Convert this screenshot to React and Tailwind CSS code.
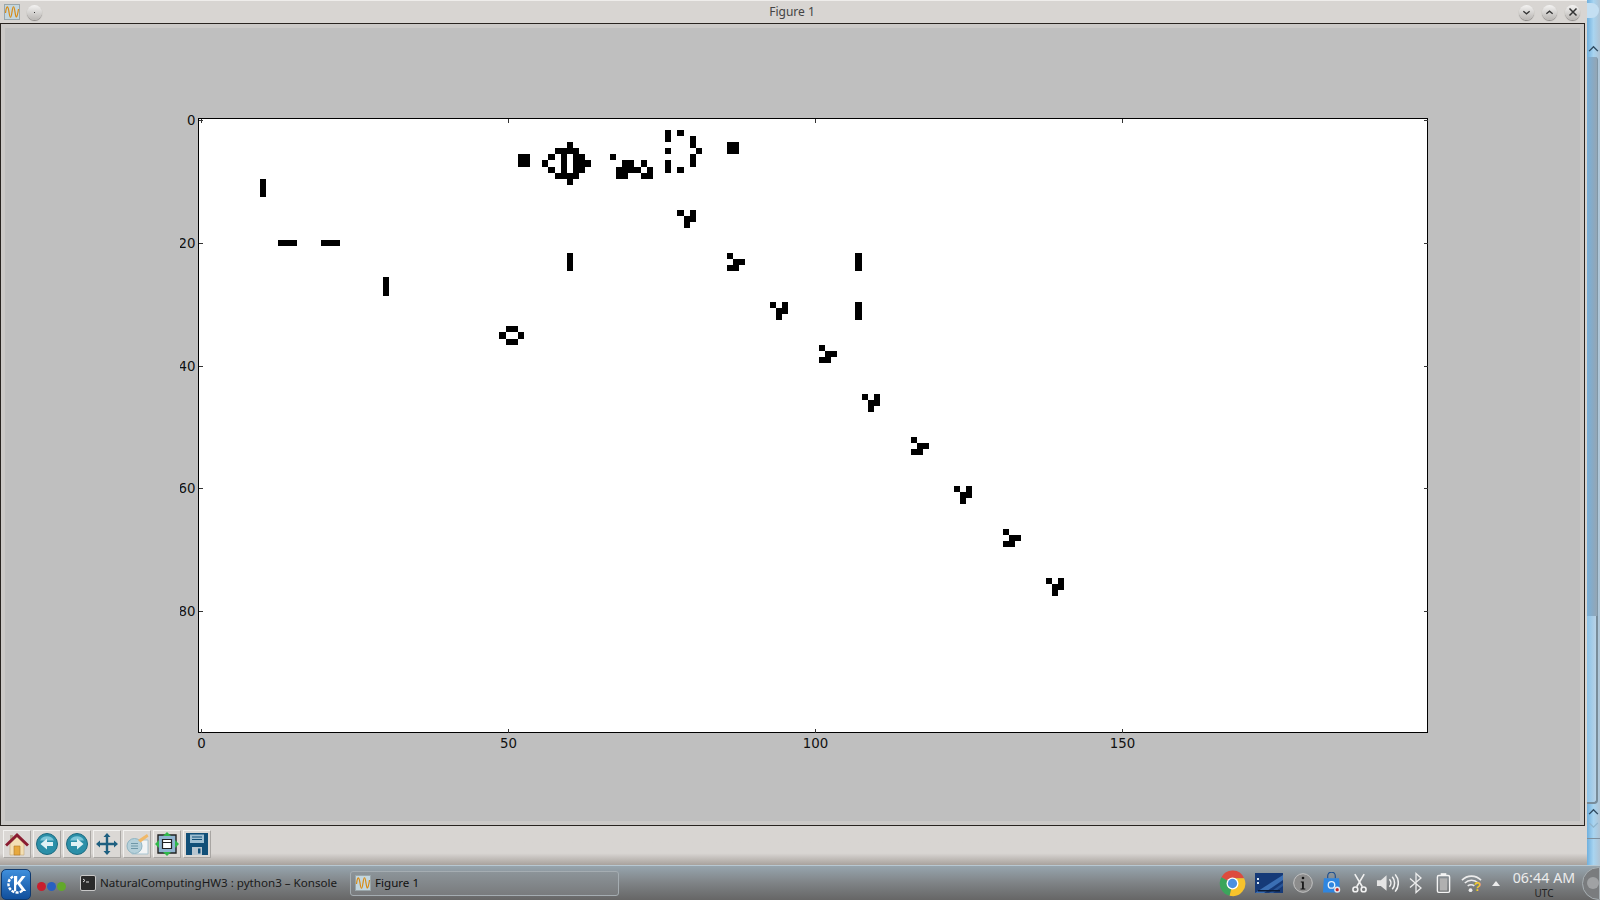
const CELL = 6.14;

const glider = (c, r) => [[c, r], [c + 2, r], [c + 1, r + 1], [c + 2, r + 1], [c + 1, r + 2]];
const zigzag = (c, r) => [[c, r], [c + 1, r + 1], [c + 2, r + 1], [c, r + 2], [c + 1, r + 2]];
const vbar = (c, r) => [[c, r], [c, r + 1], [c, r + 2]];
const hbar = (c, r) => [[c, r], [c + 1, r], [c + 2, r]];
const block = (c, r) => [[c, r], [c + 1, r], [c, r + 1], [c + 1, r + 1]];
const span = (r, from, to) => {
  const out = [];
  for (let c = from; c <= to; c++) out.push([c, r]);
  return out;
};

const cells = [
  ...vbar(10, 10), ...hbar(13, 20), ...hbar(20, 20), ...vbar(30, 26),
  // beehive
  ...span(34, 50, 51), [49, 35], [52, 35], ...span(36, 50, 51),
  ...block(52, 6),
  // big oscillator
  [60, 4], ...span(5, 58, 61), [57, 6], [59, 6], ...span(6, 61, 62),
  [56, 7], [59, 7], ...span(7, 61, 63), [57, 8], [59, 8], ...span(8, 61, 62),
  ...span(9, 58, 61), [60, 10],
  // gun debris
  [67, 6], ...span(7, 69, 70), [72, 7], ...span(8, 68, 71), [73, 8], ...span(9, 68, 69), ...span(9, 72, 73),
  // ring
  [76, 2], [76, 3], [78, 2], [80, 3], [80, 4], [81, 5], [76, 5], [80, 6], [80, 7], [76, 7], [76, 8], [78, 8],
  ...block(86, 4),
  ...vbar(60, 22), ...vbar(107, 22), ...vbar(107, 30),
  ...glider(78, 15), ...zigzag(86, 22), ...glider(93, 30), ...zigzag(101, 37), ...glider(108, 45),
  ...zigzag(116, 52), ...glider(123, 60), ...zigzag(131, 67), ...glider(138, 75),
];

const xTicks = [0, 50, 100, 150];
const yTicks = [0, 20, 40, 60, 80];

function WaveIcon({ className }) {
  return (
    <svg viewBox="0 0 16 16" className={className}>
      <rect x="0.5" y="0.5" width="15" height="15" fill="#c3d6de" stroke="#9aa6aa" />
      <path d="M1.5 9 C2.5 1, 4 1, 5 8 S7 15, 8 8 S10 1, 11 8 S13 15, 14.5 5" fill="none" stroke="#d98a12" strokeWidth="1.2" />
    </svg>
  );
}

function TitleButton({ children, className }) {
  return (
    <div className={"w-[15px] h-[15px] rounded-full bg-gradient-to-b from-[#f4f3f2] to-[#b9b6b3] shadow-[0_1px_1px_#8a8785] flex items-center justify-center " + (className || "")}>
      {children}
    </div>
  );
}

function Plot() {
  return (
    <svg width="1300" height="680" viewBox="0 0 1300 680" className="block ml-[175px] mt-[78px]" style={{ fontFamily: '"DejaVu Sans", sans-serif' }}>
      <g transform="translate(18.5 12.5)">
        <rect x="0" y="0" width="1229" height="614" fill="#fff" />
        <g shapeRendering="crispEdges" transform="translate(0 -1)">
          {cells.map(([c, r], i) => (
            <rect key={i} x={c * CELL} y={r * CELL} width={CELL} height={CELL} fill="#000" />
          ))}
        </g>
        <rect x="0" y="0" width="1229" height="614" fill="none" stroke="#000" strokeWidth="1.2" shapeRendering="crispEdges" />
        {xTicks.map((t) => {
          const x = Math.round((t + 0.5) * CELL);
          return (
            <g key={t}>
              <path d={`M${x} 0v4M${x} 614v-4`} stroke="#333" strokeWidth="1" shapeRendering="crispEdges" />
              <text x={x} y="629" textAnchor="middle" fontSize="13.33" fill="#111">{t}</text>
            </g>
          );
        })}
        {yTicks.map((t) => {
          const y = Math.round((t + 0.5) * CELL) - 1;
          return (
            <g key={t}>
              <path d={`M0 ${y}h4M1229 ${y}h-4`} stroke="#333" strokeWidth="1" shapeRendering="crispEdges" />
              <text x="-3" y={y + 4} textAnchor="end" fontSize="13.33" fill="#111">{t}</text>
            </g>
          );
        })}
      </g>
    </svg>
  );
}

function ToolButton({ children }) {
  return (
    <div className="w-[28px] h-[28px] border border-t-[#f2f1ef] border-l-[#f2f1ef] border-r-[#a8a5a2] border-b-[#a8a5a2] flex items-center justify-center bg-[#dbd8d5]">
      <svg viewBox="0 0 24 24" className="w-[24px] h-[24px]">{children}</svg>
    </div>
  );
}

function Toolbar() {
  return (
    <div className="flex gap-[2px] pl-[3px] pt-[4px]">
      <ToolButton>
        <path d="M5 3h3v5H5z" fill="#b8a890" />
        <path d="M5 12 12 5l7 7v11H5z" fill="#f3dfb4" stroke="#c8a878" strokeWidth="0.6" />
        <path d="M9 14h6v9H9z" fill="#e7a93e" stroke="#b07a2c" strokeWidth="0.6" />
        <path d="M1 13.5 12 3l11 10.5" fill="none" stroke="#8a1c30" strokeWidth="3" />
      </ToolButton>
      <ToolButton>
        <circle cx="12" cy="12" r="10.5" fill="#2b8fa8" stroke="#1c6a80" />
        <path d="M5 8.5a8 8 0 0 1 14 0" fill="#7cc6d8" />
        <path d="M5.5 12 12 6.5v3.5h6v4h-6v3.5z" fill="#dff1f5" />
      </ToolButton>
      <ToolButton>
        <circle cx="12" cy="12" r="10.5" fill="#2b8fa8" stroke="#1c6a80" />
        <path d="M5 8.5a8 8 0 0 1 14 0" fill="#7cc6d8" />
        <path d="M18.5 12 12 6.5v3.5H6v4h6v3.5z" fill="#dff1f5" />
      </ToolButton>
      <ToolButton>
        <path d="M12 1l3.5 4H13.2v5.8H19V8.5l4 3.5-4 3.5v-2.3h-5.8V19h2.3L12 23l-3.5-4h2.3v-5.8H5v2.3L1 12l4-3.5v2.3h5.8V5H8.5z" fill="#1e5f80" />
      </ToolButton>
      <ToolButton>
        <path d="M7 8h16v14H7z" fill="#f2f4f5" stroke="#a9c4d0" />
        <circle cx="9.5" cy="14" r="7.5" fill="#b5d0da" stroke="#8fb4c2" />
        <path d="M6 11.5h7M6 14h7M6 16.5h7" stroke="#6f97a8" strokeWidth="1.2" />
        <path d="M13 8 22 2l1.5 2.5-8 6z" fill="#f0b868" />
      </ToolButton>
      <ToolButton>
        <path d="M3 3h18v18H3z" fill="#8fb4d0" stroke="#222" strokeWidth="1.4" />
        <path d="M7.5 7.5h9v9h-9z" fill="#fff" stroke="#222" strokeWidth="1.2" />
        <path d="M8 10.5h8" stroke="#222" strokeWidth="1" />
        <path d="M12 0l4 4H8zM12 24l4-4H8zM0 12l4-4v8zM24 12l-4-4v8z" fill="#2fb84a" />
      </ToolButton>
      <ToolButton>
        <path d="M1 1h22v22H1z" fill="#114f78" />
        <path d="M5 2.5h14v8.5H5z" fill="#9fbfd2" />
        <path d="M7 5h10M7 7.5h10" stroke="#114f78" strokeWidth="1.2" />
        <path d="M7 15h10v8H7z" fill="#b8c6d0" />
        <path d="M13 16.5h2.5v5H13z" fill="#114f78" />
      </ToolButton>
    </div>
  );
}

function KdeLogo() {
  return (
    <div className="w-[30px] h-[31px] mt-[2px] rounded-[5px] bg-gradient-to-b from-[#3f8fdc] to-[#114f9c] border border-[#0e3a70] flex items-center justify-center">
      <svg viewBox="0 0 24 24" className="w-[24px] h-[24px]">
        <path d="M9 4.5A8.5 8.5 0 1 0 19 18" fill="none" stroke="#fff" strokeWidth="2.4" strokeDasharray="3 1.2" />
        <path d="M10 4h3.2v6.5L18 4h3.6l-5.4 7 6 8h-3.8l-5-7-1.2 1.4V19H10z" fill="#fff" />
      </svg>
    </div>
  );
}

function Tray() {
  return (
    <div className="flex items-center h-full">
      <svg viewBox="0 0 28 28" className="w-[27px] h-[27px] shrink-0">
        <path d="M14 14 2.5 7.5A13 13 0 0 1 26 8.5H14z" fill="#dd4b3e" />
        <path d="M14 14 2.5 7.5A13 13 0 0 0 11 26.7z" fill="#3ba55c" />
        <path d="M14 8.5h12A13 13 0 0 1 11 26.7L14 14z" fill="#f6c32c" />
        <circle cx="14" cy="14" r="6.2" fill="#fff" />
        <circle cx="14" cy="14" r="4.8" fill="#4a8fe0" />
      </svg>
      <svg viewBox="0 0 28 20" className="w-[28px] h-[20px] ml-[9px] shrink-0">
        <rect width="28" height="20" fill="#163a78" />
        <path d="M0 20 28 2v5L9 20z" fill="#3b6fb4" />
        <path d="M14 20 28 10v3l-10 7z" fill="#2a5698" />
        <rect x="2" y="5" width="2" height="2" fill="#d8e6f0" />
        <rect x="2" y="9" width="2" height="2" fill="#d8e6f0" />
        <rect x="3" y="17" width="22" height="1.5" fill="#0b1a34" />
      </svg>
      <svg viewBox="0 0 20 20" className="w-[20px] h-[20px] ml-[10px] shrink-0">
        <circle cx="10" cy="10" r="9.3" fill="#8c8c8c" stroke="#c4c4c4" />
        <circle cx="10" cy="5" r="1.3" fill="#111" />
        <path d="M7.8 8.4h3v7h1.5v1.2H7.5v-1.2h1.6V9.6H7.8z" fill="#111" />
      </svg>
      <svg viewBox="0 0 20 22" className="w-[19px] h-[22px] ml-[9px] shrink-0">
        <path d="M6 6V3.5a4 4 0 0 1 8 0V6" fill="none" stroke="#1d4f90" strokeWidth="1.2" />
        <path d="M2 6h16l1 15H1z" fill="#2f86e0" />
        <circle cx="10" cy="13" r="3.4" fill="none" stroke="#e8f2fb" strokeWidth="1.4" />
        <circle cx="16" cy="18" r="3.2" fill="#e8e8e8" />
        <circle cx="16" cy="18" r="1.7" fill="#c62828" />
      </svg>
      <svg viewBox="0 0 16 22" fill="none" stroke="#f1f1f1" strokeWidth="1.7" className="w-[15px] h-[22px] ml-[11px] shrink-0">
        <path d="M3 1.5 11 15M13 1.5 5 15" />
        <circle cx="3.6" cy="17.8" r="2.6" />
        <circle cx="12.4" cy="17.8" r="2.6" />
      </svg>
      <svg viewBox="0 0 24 22" className="w-[23px] h-[22px] ml-[9px] shrink-0">
        <path d="M1 8h4l6-5v16l-6-5H1z" fill="#e4e4e4" />
        <path d="M14 7a6 6 0 0 1 0 8M17 4.5a10 10 0 0 1 0 13M20 2a14 14 0 0 1 0 18" fill="none" stroke="#f1f1f1" strokeWidth="1.6" />
      </svg>
      <svg viewBox="0 0 14 22" fill="none" stroke="#ececec" strokeWidth="1.3" className="w-[14px] h-[22px] ml-[10px] shrink-0">
        <path d="M1 6.5 12 16 7 20.5V1.5L12 6 1 15.5" />
      </svg>
      <svg viewBox="0 0 16 22" fill="none" stroke="#f4f4f4" strokeWidth="1.5" className="w-[15px] h-[22px] ml-[13px] shrink-0">
        <rect x="1.5" y="3" width="13" height="18" rx="1.5" />
        <path d="M5 1.5h6" strokeWidth="2" />
        <rect x="4" y="6" width="8" height="13" fill="#b0b0b0" stroke="none" />
      </svg>
      <div className="relative w-[21px] h-[22px] ml-[10px] shrink-0">
        <svg viewBox="0 0 22 22" className="w-[21px] h-[22px]">
          <path d="M1 8a14 14 0 0 1 20 0M4 11a10 10 0 0 1 14 0M7 14a6 6 0 0 1 7 0" fill="none" stroke="#ececec" strokeWidth="1.6" />
          <circle cx="10" cy="18.5" r="2" fill="#ececec" />
        </svg>
        <span className="absolute right-[1px] bottom-[1px] text-[12px] leading-none font-bold text-[#f2c52d]" style={{ fontFamily: '"Liberation Sans", sans-serif' }}>?</span>
      </div>
      <div className="w-0 h-0 ml-[10px] border-l-[4px] border-r-[4px] border-b-[5px] border-l-transparent border-r-transparent border-b-[#ececec]" />
      <div className="ml-[12px] w-[64px] flex flex-col items-center text-[#ececec] leading-none shrink-0">
        <span className="text-[14.2px] whitespace-nowrap tracking-[0.1px] mt-[3px]">06:44 AM</span>
        <span className="text-[10px] text-[#222] mt-[3px]">UTC</span>
      </div>
    </div>
  );
}

export default function App() {
  return (
    <div className="relative w-[1600px] h-[900px] overflow-hidden flex flex-col bg-[#6f7070]" style={{ fontFamily: '"Noto Sans", sans-serif' }}>
      <div className="flex h-[865px]">
        <div className="w-[1587px] flex flex-col bg-[#d8d5d2]">
          {/* title bar */}
          <div className="h-[23px] flex items-center relative border-t border-t-[#efedeb] bg-[#d8d5d2]">
            <WaveIcon className="w-[16px] h-[16px] ml-[4px]" />
            <TitleButton className="ml-[7px]">
              <div className="w-[1px] h-[1px] bg-[#333]" />
            </TitleButton>
            <div className="absolute left-0 right-0 top-[2px] text-center text-[12px] text-[#444] pr-[3px]">Figure 1</div>
            <div className="ml-auto mr-[7px] flex gap-[8px]">
              <TitleButton>
                <svg viewBox="0 0 10 10" className="w-[9px] h-[9px]"><path d="M1.5 3.5 5 6.5l3.5-3" fill="none" stroke="#333" strokeWidth="1.4" /></svg>
              </TitleButton>
              <TitleButton>
                <svg viewBox="0 0 10 10" className="w-[9px] h-[9px]"><path d="M1.5 6.5 5 3.5l3.5 3" fill="none" stroke="#333" strokeWidth="1.4" /></svg>
              </TitleButton>
              <TitleButton>
                <svg viewBox="0 0 10 10" className="w-[10px] h-[10px]"><path d="M1.5 1.5l7 7M8.5 1.5l-7 7" fill="none" stroke="#333" strokeWidth="1.5" /></svg>
              </TitleButton>
            </div>
          </div>
          {/* figure canvas */}
          <div className="h-[803px] mr-[2px] border border-[#28231f] p-[4px] bg-[#cbc9c7]">
            <div className="h-full bg-[#bfbfbf] overflow-hidden">
              <Plot />
            </div>
          </div>
          <div className="flex-1 bg-gradient-to-b from-[#d8d5d2] from-70% to-[#a8a29d]">
            <Toolbar />
          </div>
        </div>
        {/* sliver of the window behind */}
        <div className="flex-1 relative bg-gradient-to-r from-[#6fb0de] via-[#a8d4f0] to-[#b0c4d4]">
          <div className="absolute left-0 top-[3px] w-[12px] h-[15px] rounded-r-full bg-[#c4dff2]" />
          <svg viewBox="0 0 12 8" className="absolute left-[1px] top-[45px] w-[11px] h-[7px]"><path d="M1 7 6 2l5 5" fill="none" stroke="#2f4a60" strokeWidth="1.6" /></svg>
          <div className="absolute left-0 top-[57px] w-[11px] h-[559px] rounded-tr-[3px] bg-gradient-to-r from-[#78b0da] to-[#93a5b4] border-r border-[#7f96a6]" />
          <div className="absolute left-0 top-[616px] w-[11px] h-[188px] rounded-br-[4px] bg-gradient-to-r from-[#8cc4ea] to-[#b8d2e6] border-r-2 border-b-2 border-[#788c9a]" />
          <svg viewBox="0 0 12 8" className="absolute left-[1px] top-[808px] w-[11px] h-[7px]"><path d="M1 7 6 2l5 5" fill="none" stroke="#2f4a60" strokeWidth="1.6" /></svg>
          <svg viewBox="0 0 12 8" className="absolute left-[1px] top-[822px] w-[11px] h-[7px]"><path d="M1 1l5 5 5-5" fill="none" stroke="#8fb4cc" strokeWidth="1.4" /></svg>
          <div className="absolute left-0 right-0 top-[838px] h-[1px] bg-[#7f8f9c]" />
        </div>
      </div>
      {/* panel */}
      <div className="h-[35px] flex items-center border-t border-t-[#b8c8d2] bg-gradient-to-b from-[#97a5ae] via-[#7f8386] to-[#666666] text-[11.6px]">
        <div className="ml-[1px]"><KdeLogo /></div>
        <div className="ml-[6px] mt-[6px] flex gap-[1px]">
          <div className="w-[9px] h-[9px] rounded-full bg-[#c81e2e]" />
          <div className="w-[9px] h-[9px] rounded-full bg-[#2860c0]" />
          <div className="w-[9px] h-[9px] rounded-full bg-[#62a82a]" />
        </div>
        <div className="ml-[14px] flex items-center gap-[4px] text-[#1a1a1a] w-[270px]">
          <svg viewBox="0 0 16 16" className="w-[16px] h-[16px] shrink-0">
            <rect x="0.5" y="0.5" width="15" height="15" rx="1.5" fill="#2a2a2a" stroke="#c8c8c8" />
            <path d="M3 4l2 1.5L3 7M6 7h3" stroke="#e0e0e0" fill="none" />
          </svg>
          <span className="whitespace-nowrap">NaturalComputingHW3 : python3 – Konsole</span>
        </div>
        <div className="w-[269px] h-[25px] rounded-[3px] border border-[#a5adb2] bg-gradient-to-b from-[#8c9499] to-[#797b7d] flex items-center pl-[4px] gap-[4px] text-[#111]">
          <WaveIcon className="w-[16px] h-[16px] shrink-0" />
          <span>Figure 1</span>
        </div>
        <div className="ml-auto h-full flex items-center">
          <Tray />
          <div className="w-[18px] h-[33px] ml-[6px] rounded-l-full border border-[#a8b0b4] bg-[#7a7c7e] flex items-center pl-[4px]">
            <div className="w-[12px] h-[12px] rounded-full bg-[#a0a2a4]" />
          </div>
        </div>
      </div>
    </div>
  );
}
